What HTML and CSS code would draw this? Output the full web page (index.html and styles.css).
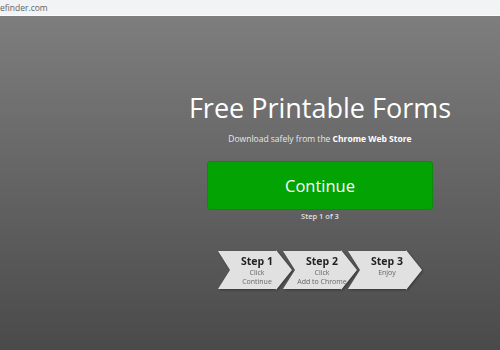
FILE: index.html
```html
<!DOCTYPE html>
<html lang="en">
<head>
    <meta charset="UTF-8">
    <meta name="viewport" content="width=device-width, initial-scale=1.0">
    <title>Free Printable Forms</title>
    <link rel="stylesheet" href="styles.css">
</head>
<body>
    <div class="address-bar">efinder.com</div>

    <div class="page">
        <div class="container">
            <h1>Free Printable Forms</h1>
            <p class="subtitle">Download safely from the <strong>Chrome Web Store</strong></p>

            <button type="button" class="continue-btn">Continue</button>
            <p class="step-count">Step 1 of 3</p>

            <div class="steps">
                <div class="step">
                    <span class="step-title">Step 1</span>
                    <span class="step-text">Click<br>Continue</span>
                </div>
                <div class="step">
                    <span class="step-title">Step 2</span>
                    <span class="step-text">Click<br>Add to Chrome</span>
                </div>
                <div class="step">
                    <span class="step-title">Step 3</span>
                    <span class="step-text">Enjoy</span>
                </div>
            </div>
        </div>
    </div>
</body>
</html>
```

FILE: styles.css
```css
* {
    margin: 0;
    padding: 0;
    box-sizing: border-box;
}

html, body {
    height: 100%;
}

body {
    font-family: 'Open Sans', 'Noto Sans', sans-serif;
    background: linear-gradient(180deg, #808080 0%, #4a4a4a 100%);
    display: flex;
    flex-direction: column;
    overflow: hidden;
}

.address-bar {
    height: 16px;
    background: #f1f3f4;
    border-bottom: 1px solid #fafafa;
    color: #5f6368;
    font-size: 8.5px;
    line-height: 16px;
}

.page {
    flex: 1;
    display: flex;
    justify-content: center;
    padding-left: 140px;
}

.container {
    display: flex;
    flex-direction: column;
    align-items: center;
    padding-top: 74px;
}

h1 {
    color: #fff;
    font-size: 27px;
    font-weight: 500;
    line-height: 36px;
}

.subtitle {
    margin-top: 6px;
    color: #e8e8e8;
    font-size: 8.5px;
    line-height: 14px;
}

.subtitle strong {
    color: #fff;
    font-weight: 700;
}

.continue-btn {
    margin-top: 15px;
    width: 226px;
    height: 49px;
    background: #02a302;
    border: 1px solid #0b8a0b;
    border-radius: 3px;
    color: #fff;
    font-family: inherit;
    font-size: 16.5px;
    cursor: pointer;
}

.step-count {
    margin-top: 1px;
    color: #e0e0e0;
    font-size: 7.5px;
    font-weight: 600;
    line-height: 11px;
}

.steps {
    display: flex;
    margin-top: 28px;
    filter: drop-shadow(1px 1px 1px rgba(0, 0, 0, 0.35));
}

.step {
    width: 74px;
    height: 40px;
    background: #e1e1e1;
    clip-path: polygon(0 1px, 58px 1px, 58px 0, 74px 20px, 58px 40px, 58px 39px, 0 39px, 12px 20px);
    display: flex;
    flex-direction: column;
    align-items: center;
    padding-top: 4px;
    padding-left: 4px;
}

.step + .step {
    margin-left: -9px;
}

.step-title {
    color: #222;
    font-size: 10.5px;
    font-weight: 700;
    line-height: 14px;
}

.step-text {
    color: #666;
    font-size: 7px;
    line-height: 9px;
    text-align: center;
}
```
